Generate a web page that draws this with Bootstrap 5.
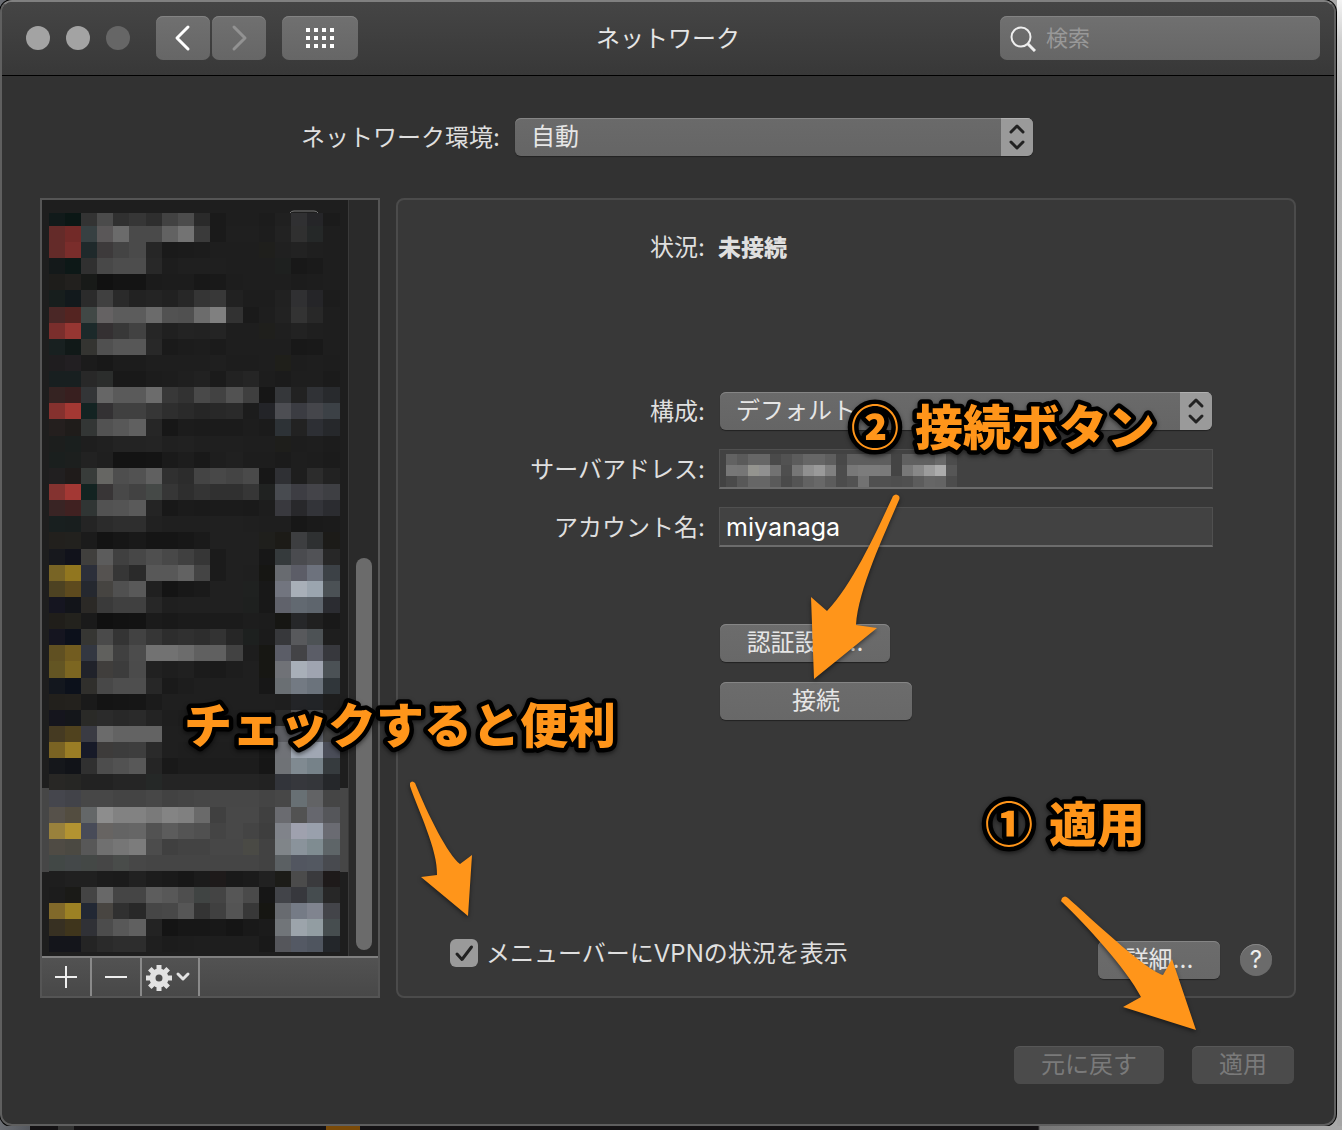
<!DOCTYPE html>
<html lang="ja">
<head>
<meta charset="utf-8">
<meta name="viewport" content="width=device-width, initial-scale=1">
<title>ネットワーク</title>
<link href="https://cdn.jsdelivr.net/npm/bootstrap@5.3.0/dist/css/bootstrap.min.css" rel="stylesheet">
<style>
  body { font-family: Inter, "Noto Sans CJK JP", sans-serif; font-size: 24px; line-height: 36px; color: #dfdfdf;
    background: linear-gradient(90deg, #6b6e74 0, #55585e 30px, #141214 30px, #141214 58px, #333 58px, #333 74px, #141214 74px, #141214 326px, #7a4a08 326px, #7a4a08 360px, #141214 360px, #141214 calc(100% - 304px), #777 calc(100% - 302px), #aaa 100%); overflow: hidden; }
  .desk-edge { background: linear-gradient(#f4f4f4, #d0d0d0 40px, #b5b5b5 120px, #a5a5a5); width: 5px; }
  .prefs-window { background: #323232; border: 2px solid #5f5f5f; border-top-color: #808080; border-radius: 12px;
    box-shadow: 0 0 0 1px #000; min-height: calc(100vh - 4px); margin-right: 1px; }
  .title-bar { height: 74px; border-bottom: 1px solid #000; border-radius: 10px 10px 0 0; background: linear-gradient(#454545, #383838); padding: 14px 14px 15px 24px; }
  .light { width: 24px; height: 24px; border-radius: 50%; background: #a3a3a3; margin-right: 16px; }
  .light-off { background: #666; }
  .nav-pair { gap: 2px; margin-left: 10px; }
  .tool-btn { width: 54px; height: 44px; padding: 0; border: 0; border-radius: 7px; background: linear-gradient(#707070, #666); box-shadow: inset 0 1px #838383; display: flex; align-items: center; justify-content: center; }
  .tool-wide { width: 76px; }
  .win-title { left: 0; right: 0; top: 19px; text-align: center; pointer-events: none; font-size: 24px; line-height: 36px; font-weight: 400; margin: 0; color: #e6e6e6; }
  .search-box { width: 320px; height: 44px; border-radius: 7px; background: linear-gradient(#707070, #666); box-shadow: inset 0 1px #838383; padding-left: 10px; }
  .search-box input { background: none; border: 0; outline: 0; color: #fff; min-width: 0; padding: 0 0 0 10px; font-size: 22px; }
  .search-box input::placeholder { color: #989898; opacity: 1; }
  .main-area { padding: 42px 38px 40px; }
  .place-row { margin: 0 263px 42px 261px; gap: 15px; }
  .place-row label { padding-top: 2px; }
  .pop-up { height: 38px; border-radius: 6px; overflow: hidden; background: linear-gradient(#6a6a6a, #656565); box-shadow: inset 0 1px #858585, 0 1px 1px #222; }
  .pop-up select { appearance: none; background: none; border: 0; color: #e6e6e6; height: 38px; min-width: 0; padding: 0 0 0 16px; line-height: 36px; }
  .stepper { width: 32px; background: #9a9a9a; box-shadow: inset 0 1px #b0b0b0; display: flex; align-items: center; justify-content: center; }
  .columns { gap: 16px; margin-bottom: 48px; }
  .service-box { width: 340px; border: 2px solid #555; }
  .service-list { background: #1e1e1e; height: 756px; }
  .scroll-track { background: #2a2a2a; border-left: 1px solid #3a3a3a; padding: 0 6px 6px 7px; }
  .scroll-thumb { width: 16px; height: 392px; border-radius: 8px; background: #6b6b6b; }
  .list-tools { height: 40px; border-top: 2px solid #808080; background: linear-gradient(#525252, #484848); }
  .list-tools button { width: 50px; padding: 0; border: 0; border-right: 2px solid #8a8a8a; background: none; display: flex; align-items: center; justify-content: center; }
  .list-tools .gear-btn { width: 58px; padding-right: 4px; }
  .detail-box { min-width: 0; background: #383838; border: 2px solid #4b4b4b; border-radius: 8px; padding: 28px 0 17px; }
  .form-line { display: grid; grid-template-columns: 307px 1fr; column-gap: 15px; align-items: center; padding-right: 82px; min-height: 38px; }
  .form-line > :first-child { text-align: right; padding-top: 2px; }
  .status-line { margin-bottom: 126px; column-gap: 13px; }
  .status-line strong { font-size: 23px; padding-top: 2px; font-weight: 900; }
  .entry-line { margin-top: 18px; }
  .pop-up-line { margin-bottom: 1px; }
  .auth-line { margin-top: 77px; }
  .connect-line { margin-top: 20px; }
  .entry { height: 40px; background: #424242; border: 1px solid #505050; border-bottom: 2px solid #6c6c6c; margin: 0 -1px; }
  .entry-text { color: #fff; font-size: 25px; padding: 0 6px; min-width: 0; outline: 0; }
  .push { height: 38px; padding: 0; border: 0; border-radius: 6px; color: #e6e6e6; line-height: 36px; background: linear-gradient(#6c6c6c, #686868); box-shadow: inset 0 1px #858585, 0 1px 1px #222; }
  .push:disabled { background: #4b4b4b; color: #7a7a7a; box-shadow: inset 0 1px #575757; }
  .w-auth { width: 170px; } .w-connect { width: 192px; } .w-detail { width: 122px; } .w-revert { width: 150px; } .w-apply { width: 102px; }
  .foot-line { padding: 0 22px 0 52px; }
  .vpn-choice { padding-bottom: 7px; }
  .vpn-choice label { padding-top: 2px; }
  .tick { appearance: none; width: 28px; height: 28px; border-radius: 6px; margin: 0 8px 0 0;
    background: #9a9a9a url("data:image/svg+xml,%3Csvg xmlns='http://www.w3.org/2000/svg' viewBox='0 0 28 28'%3E%3Cpath d='M7 15l5 5.500L21.500 8' fill='none' stroke='%23222' stroke-width='3' stroke-linecap='round' stroke-linejoin='round'/%3E%3C/svg%3E"); }
  .help-btn { width: 32px; height: 32px; margin: 0 0 3px 20px; border: 0; border-radius: 50%; background: #6b6b6b; color: #eee; padding: 0; line-height: 32px; box-shadow: inset 0 1px #858585; }
  .bottom-line { gap: 28px; padding-right: 2px; }
  .notes { left: 0; top: 0; pointer-events: none; overflow: visible; filter: drop-shadow(0 2px 2px rgba(0,0,0,.5)); }
  .notes text { font: 900 48px "Noto Sans CJK JP", sans-serif; fill: #ff951a; stroke: #000; stroke-width: 9px; stroke-linejoin: round; paint-order: stroke; }
</style>
<script src="https://cdn.jsdelivr.net/npm/bootstrap@5.3.0/dist/js/bootstrap.bundle.min.js"></script>
</head>
<body class="position-relative">
<div class="d-flex">
<div class="prefs-window flex-fill">
  <header class="title-bar d-flex align-items-center position-relative">
    <span class="light"></span><span class="light"></span><span class="light light-off"></span>
    <div class="nav-pair d-flex">
      <button class="tool-btn" aria-label="戻る"><svg width="20" height="28" fill="none" stroke="#fff" stroke-width="3" stroke-linecap="round" stroke-linejoin="round"><path d="M15 3L4 14l11 11"/></svg></button>
      <button class="tool-btn" aria-label="進む"><svg width="20" height="28" fill="none" stroke="#929292" stroke-width="3" stroke-linecap="round" stroke-linejoin="round"><path d="M5 3l11 11L5 25"/></svg></button>
    </div>
    <button class="tool-btn tool-wide ms-3" aria-label="すべてを表示"><svg width="28" height="20" fill="#fff"><path d="M0 0h4v4H0zM8 0h4v4H8zM16 0h4v4h-4zM24 0h4v4h-4zM0 8h4v4H0zM8 8h4v4H8zM16 8h4v4h-4zM24 8h4v4h-4zM0 16h4v4H0zM8 16h4v4H8zM16 16h4v4h-4zM24 16h4v4h-4z"/></svg></button>
    <h1 class="win-title position-absolute">ネットワーク</h1>
    <label class="search-box d-flex align-items-center ms-auto"><svg class="flex-shrink-0" width="26" height="28" fill="none" stroke="#eee" stroke-width="2"><circle cx="11" cy="13" r="9.500"/><path d="M17.500 19.500l7.500 7.500" stroke-width="3"/></svg><input class="flex-fill" type="search" placeholder="検索" aria-label="検索"></label>
  </header>

  <main class="main-area">
    <div class="place-row d-flex align-items-center">
      <label for="place">ネットワーク環境:</label>
      <div class="pop-up d-flex flex-fill"><select id="place" class="flex-fill"><option>自動</option></select><span class="stepper"><svg width="20" height="28" fill="none" stroke="#222" stroke-width="3" stroke-linecap="round" stroke-linejoin="round"><path d="M4 9l6-6 6 6M4 19l6 6 6-6"/></svg></span></div>
    </div>

    <div class="columns d-flex">
      <section class="service-box d-flex flex-column flex-shrink-0">
        <div class="service-list d-flex">
          <svg id="services" class="flex-shrink-0" width="306" height="756"><rect y="588" width="306" height="84" fill="#464646"/><path d="M248 13q1-2 4-2h20q3 0 4 2" fill="none" stroke="#777"/><g id="tiles" transform="translate(6.600 13) scale(16.170 16.130)" shape-rendering="crispEdges"></g></svg>
          <div class="scroll-track flex-fill d-flex align-items-end"><div class="scroll-thumb"></div></div>
        </div>
        <div class="list-tools d-flex">
          <button aria-label="追加"><svg width="22" height="22" stroke="#eee" stroke-width="2"><path d="M0 11h22M11 0v22"/></svg></button>
          <button aria-label="削除"><svg width="22" height="22" stroke="#eee" stroke-width="2"><path d="M0 11h22"/></svg></button>
          <button class="gear-btn" aria-label="アクション"><svg width="46" height="28" viewBox="0 0 46 28"><g fill="none" stroke="#e2e2e2"><circle cx="14" cy="15" r="6.500" stroke-width="6"/><path d="M14 2v5M14 23v5M1 15h5M22 15h5M4.800 5.800l3.500 3.500M19.700 20.700l3.500 3.500M23.200 5.800l-3.500 3.500M8.300 20.700l-3.500 3.500" stroke-width="5"/><path d="M33 11l5 5 5-5" stroke-width="3" stroke-linecap="round" stroke-linejoin="round"/></g></svg></button>
        </div>
      </section>

      <section class="detail-box flex-fill d-flex flex-column">
        <div class="form-line status-line"><span>状況:</span><strong>未接続</strong></div>
        <div class="form-line pop-up-line"><label for="conf">構成:</label>
          <div class="pop-up d-flex"><select id="conf" class="flex-fill"><option>デフォルト</option></select><span class="stepper"><svg width="20" height="28" fill="none" stroke="#222" stroke-width="3" stroke-linecap="round" stroke-linejoin="round"><path d="M4 9l6-6 6 6M4 19l6 6 6-6"/></svg></span></div></div>
        <div class="form-line entry-line"><span>サーバアドレス:</span><div class="entry"><svg class="d-block" width="240" height="37"><g id="address" transform="translate(6 4) scale(11 11)" shape-rendering="crispEdges"></g></svg></div></div>
        <div class="form-line entry-line"><label for="acct">アカウント名:</label><input id="acct" class="entry entry-text" value="miyanaga"></div>
        <div class="form-line auth-line"><span></span><button class="push w-auth">認証設定...</button></div>
        <div class="form-line connect-line"><span></span><button class="push w-connect">接続</button></div>
        <div class="foot-line d-flex align-items-end mt-auto">
          <div class="vpn-choice d-flex align-items-center"><input class="tick" type="checkbox" id="vpn" checked><label for="vpn">メニューバーにVPNの状況を表示</label></div>
          <button class="push w-detail ms-auto">詳細...</button>
          <button class="help-btn" aria-label="ヘルプ">?</button>
        </div>
      </section>
    </div>

    <div class="bottom-line d-flex justify-content-end">
      <button class="push w-revert" disabled>元に戻す</button>
      <button class="push w-apply" disabled>適用</button>
    </div>
  </main>
</div>
<div class="desk-edge"></div>
</div>

<svg class="notes position-absolute" width="1336" height="1126">
  <g fill="#ff951a">
    <path d="M893 496q3-3 6 0 1 2 0 4C884 535 858 590 856 625L877 628 814 679 811 597 827 611C852 585 875 535 893 496z"/>
    <path d="M410 783q2-3 5 0C428 815 448 855 460 864L472 855 468 916 421 877 437 875C438 850 418 810 410 786z"/>
    <path d="M1062 898q3-3 6 0C1096 923 1146 970 1163 975L1172 959 1196 1030 1123 1007 1141 997C1126 968 1086 925 1061 901z"/>
  </g>
  <text x="184" y="743">チェックすると便利</text>
  <text y="445"><tspan x="851">②</tspan><tspan x="915">接続ボタン</tspan></text>
  <text y="842"><tspan x="985">①</tspan><tspan x="1049">適用</tspan></text>
</svg>

<script>
  // Each row lists cell colours: two digits are a grey level, six a full colour, "*n" repeats.
  const services = `111a1a 0b1715 33 4b 30 36 2e 42 4c 2a 1a 1e 1e 1c 20 303032 252528 1b
642b29 722a28 374042 5a5758 6b 4a 4a 62 73 3a 1a 1f 1f 1d 22 30 252828 1e
642b29 7a2d2b 1f292b 3d3a3b 44 4a 26 1a 1b 1c 1e 1e 1e 1f1f1c 20 22 1f 1e
14191a 0d1817 30 48 4d 4d 28 1d 1f 1f 1f 1e 1e 1e 1e201f 18 1a 1e
1e1d1b 22201e 181a18 11 14 14 1b 1c 1c 18 19 1d 1e 1e 1e 1c 1d 1e
171e1d 12191c 2b 40 2a 22 24 21 27 35 38 21 1d 1d 21 303032 252528 1c
4a2726 542421 414846 656263 5c 5c 6b 52 50 6c 80 32 1a 1e 22 33 28 1e
7a2e2c 963632 1c292a 343032 38 42 26 20 23 22 24 1e 1e 1f1f1c 1f 22 1f 1e
182020 111918 343431 50 57 57 28 1a 1c 1d 1b 1e 1e 1e 1e 18 19 1e
1f1d1f 221f22 1b 18 1c 1c 1e 1e 1e 1e 1f 1d 1d 1e 1f1f1a 1d 1e 1d
181f20 181f20 28 2b2d2c 19 19 1c 1d 1f 21 1b 22 25 1d 1b 1e 1e 1b
352322 381f1f 333537 66 5a 5a 6c 38 32 49 42 52 3f 16 35373a 22 303236 282a2d
85312e a33833 132322 333133 40 40 36 2e 2a 26 28 2a 1c 232428 4d4e53 3b3c42 45464b 3c4146
241f1e 1f1c1a 333635 52 58 60 26 17 1c 1b 1b 1b 1d 1b 2d3236 22 2d2f34 26282b
1c1e1d 1a1f1e 1e 20 23 23 24 20 21 1f 1f 1f 1e 1e 1e1e1b 1d 1e 1c
1a1f1e 1c1f1e 22 1f 13 13 14 1a 1d 19 1e 20 1d 1d 1b 1e 1d 1b
211f20 1f1b1a 383c3a 666663 4e 52 60 30 2c 44 48 44 4a 17 2f3034 1e 2c 22
843330 a33834 132321 383536 48 42 454947 36 2e 34 30 30 36 202221 484b50 3d3d43 444449 3e3f43
392424 402121 303534 52 54 5a 24 18 1b 1a 1b 1b 1a 1d 39393e 28282b 333439 2b2c30
181f1f 181e1e 24 2b 2e 2e 21 1f 1f 1f 20 20 1f 1e 1e 17 1a 1b
22201d 22211e 1b 13 16 19 15 15 17 1a 20 20 20 1f1f1c 1c1b17 3d3e40 2e3031 1c1b18
17181d 11121b 403f3d 5c 40 47 4f 48 40 36 1b 20 20 17 353a3c 4a4b4f 515256 27
786425 91761f 2c2f3a 555250 36 2a 58 58 62 44 1b 20 1f 161613 686b70 5c5d67 6d727d 3c4146
4d4222 5d4a1e 25282f 464441 50 59 20 14 18 1a 20 20 1f2120 18 72757f a8afb8 9ba5af 4b5155
151520 121419 2b2926 3a 40 40 27 1f 20 20 20 20 1e201f 18 60626b 626971 5e656d 2b2c31
201e1a 23221d 1a 10 12 13 1b 19 1b 1b 1b 1b 1d 1c 161613 262729 20 19
151520 0c101b 363633 4a 34 42 36 2d 30 2d 33 26 1d201f 1b 37383b 58595c 4d5255 1e
605022 725c20 333741 60605d 40 4c 72 72 6c 60 60 42 1d 171713 5b5d67 434346 5b5d67 37383d
635523 7c6621 20222a 403e3c 3c 4b 21 1e 20 1b 1a 1d 1f 171713 707277 a8afb8 9fa4b0 4b5155
13171e 0c111b 302f2c 48 4e 4e 27 1a 1d 1f 1f 1f 1f 17 6a6f73 737a83 6b737c 30363a
22201c 23211d 1a 14 15 16 1b 1f*7 1e 232427 222427 1d
15151d 14161a 2a2a27 2b 28 2a 23 1e 1d 1e*4 1c 2a 50 48 22
453a22 50421e 3a3b43 6b 63 63 63 1f*6 16 5c5d62 606168 636770 40
7a6323 9a7d25 171a28 3d3b3a 3c 3e 2a 1f 1e*5 18 707277 a0a8b3 a0a7b3 4a4d58
15171b 111318 30 4d 52 58 25 19 1c*5 16 6f7276 808a91 768289 363b3e
282725 262624 22 22 25 25 252827 24*6 22 32343a 36373c 34363a 25272a
45464d 424349 47 47 44 44 47 42 44 46 47*3 44 47 687074 626365 45
56514a 534d40 646768 8d 82 82 7a 84 80 6a 40 48 48 40 6a6b70 52 66676e 55565a
99813c b39331 484b58 676462 64 66 52 5c 54 50 44 48 44 3e 80838a 9fa1ae 99a0ac 6a6b72
4f4b44 4b4942 58 70 76 7c 4c 40 43 43 47 47 4a4a45 42 808589 8a939b 7f8c91 5e6568
424846 444849 444846 46 494c4a 47 45*7 42 5b6063 525660 535861 484a4f
1e 20 20 1c 1b 21 1c 1a 17 1b 1e1a1a 19 1b 21 1c1c18 4b 3a3a3d 1e1a1a
1c 1a1a17 44 68 45 45 5d 58 4e 404443 44 56 4a 16 424449 37383d 454c4f 27
81692a 9c8124 222834 484541 30 28 46 48 56 34 40 54 38 161612 686b70 757b86 80848f 434449
373022 3f351c 303136 4c 58 60 23 14 17 17 18 15 19 1b 717579 9ca4ab 929da2 464d4f
14151b 14151b 24 2a 2d 2d 1f 1c 1d 1e 1e 1e 1e 19 55565b 545964 4f555f 23262a`;
  const address = `62 5a 66 66 4a 52 5c 66 66 5e 48 5e*4 44 60 60 60 6a 4c
77 76 94948f 90 72 4e 76 90 9a 80 4c 78 7c 7c 7a 44 78 88 9c ac 56
4a 58 66 66 5a 4a 54 62 68 5c 4c 52 72 50 50 4e 50 5c 66 64 4c`;
  function paint(id, data, firstHeight) {
    let out = '', y = 0;
    data.split('\n').forEach((line, r) => {
      const h = r ? 1 : firstHeight;
      let x = 0;
      line.split(' ').forEach(cell => {
        const [c, n = 1] = cell.split('*');
        const colour = c.length === 2 ? c + c + c : c;
        out += `<rect x="${x}" y="${y}" width="${n}" height="${h}" fill="#${colour}"/>`;
        x += +n;
      });
      y += h;
    });
    document.getElementById(id).innerHTML = out;
  }
  paint('tiles', services, 0.8);
  paint('address', address, 1);
</script>
</body>
</html>
